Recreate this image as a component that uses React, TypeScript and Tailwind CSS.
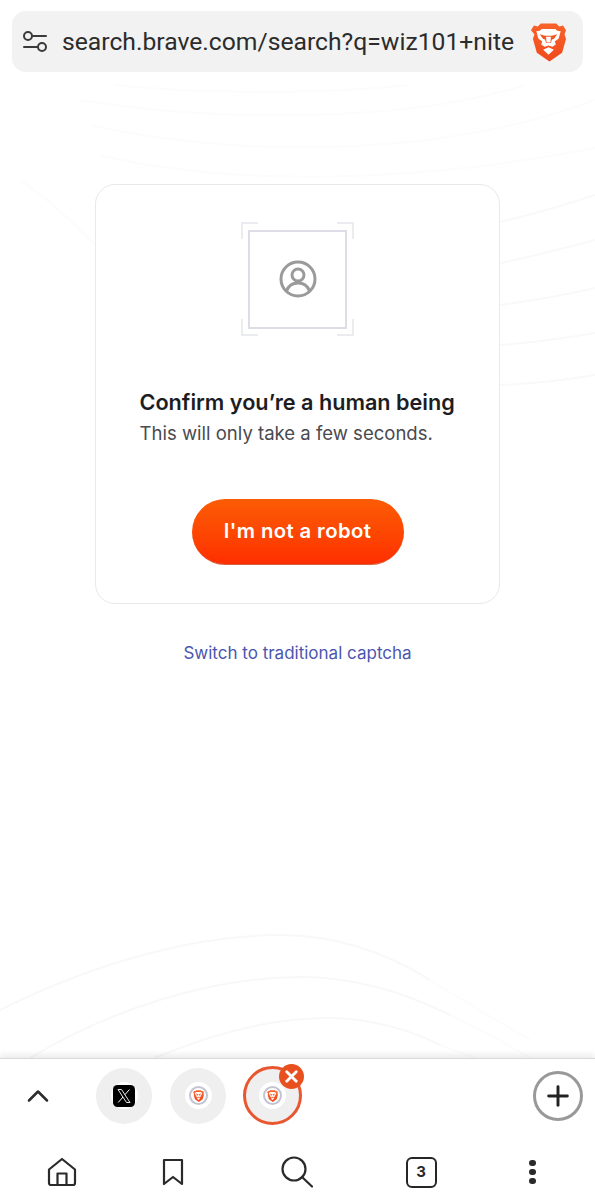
import React from 'react';
import { ChevronUp, Plus, X } from 'lucide-react';

const BraveLogo = ({ className }: { className?: string }) => (
  <svg viewBox="0 0 36 40" className={className}>
    <defs>
      <linearGradient id="braveShield" x1="0" y1="0" x2="0" y2="1">
        <stop offset="0" stopColor="#f9622a" />
        <stop offset="1" stopColor="#f04a1c" />
      </linearGradient>
    </defs>
    <path
      d="M10 1h16l3 3 4-1 3 5-1.500 4 1.500 5-4 14-13 9-13-9-4-14 1.500-5L0 8l3-5 4 1z"
      fill="url(#braveShield)"
    />
    <path
      d="M11 6.500h14l2 2 3.500.500-2 7.500-4 3 1 3-3.500 2.500-4-1.500-4 1.500-3.500-2.500 1-3-4-3-2-7.500 3.500-.500z"
      fill="#fff"
    />
    <path d="M9 12l5.500 1.500h7L27 12l-3.500 5-2 .500-1 3.500h-5l-1-3.500-2-.500z" fill="#f4561f" />
    <path d="M15.500 14.500h5l-.500 6h-4z" fill="#fff" />
    <path d="M12.500 28l5.500-2.500 5.500 2.500-5.500 5z" fill="#fff" />
  </svg>
);

const XLogo = () => (
  <svg viewBox="0 0 22 22" className="w-[22px] h-[22px]">
    <rect width="22" height="22" rx="4.500" fill="#000" />
    <path d="M5 4.500h3.500L17 17.500h-3.500z" fill="none" stroke="#fff" strokeWidth="0.900" />
    <path d="M16.500 4.500L11.800 9.800M10 12l-4.800 5.500" stroke="#fff" strokeWidth="1" />
  </svg>
);

const TabFavicon = () => (
  <div className="w-[27px] h-[27px] rounded-full bg-white flex items-center justify-center">
    <div className="w-[19px] h-[19px] rounded-full border-2 border-[#c3c4d2] flex items-center justify-center">
      <BraveLogo className="w-[11px] h-[12px]" />
    </div>
  </div>
);

const Corner = ({ className }: { className: string }) => (
  <div className={`absolute w-[17px] h-[17px] border-[#ebecef] ${className}`}></div>
);

export default function App() {
  return (
    <div className="relative w-[595px] h-[1200px] bg-white flex flex-col overflow-hidden">
      {/* faint wave lines behind the page */}
      <svg viewBox="0 0 595 1058" className="absolute left-0 top-0 w-[595px] h-[1058px]" fill="none" strokeWidth="2">
        <g stroke="#fcfcfc">
          <path d="M115 85C200 94 330 94 410 85" />
          <path d="M80 100C200 120 400 125 525 85" />
          <path d="M90 125C250 160 450 155 595 100" />
          <path d="M100 155C200 180 380 190 595 148" />
          <path d="M20 180C50 200 70 220 95 245" />
        </g>
        <g stroke="#f9f9f9">
          <path d="M500 222C530 215 565 205 595 195" />
          <path d="M500 263C530 257 565 248 595 240" />
          <path d="M500 305C530 301 565 295 595 288" />
          <path d="M500 345C530 343 565 338 595 333" />
          <path d="M500 385C530 384 565 380 595 375" />
        </g>
        <g stroke="#f8f8f8">
          <path d="M0 1010C100 960 200 935 280 935C340 935 390 955 430 980" />
          <path d="M30 1058C110 1010 210 977 300 977C360 977 410 995 450 1015" />
          <path d="M155 1058C220 1030 280 1018 330 1018C370 1018 410 1030 440 1045" />
        </g>
        <g stroke="#fcfcfc">
          <path d="M430 980C465 1002 500 1022 530 1040" />
          <path d="M450 1015C480 1030 505 1042 530 1058" />
          <path d="M440 1045C450 1049 465 1054 475 1058" />
        </g>
      </svg>

      <header className="relative px-3 pt-[11px]">
        <div className="h-[61px] rounded-[14px] bg-[#f2f2f2] flex items-center pl-[10px] pr-[17px]">
          <svg viewBox="0 0 26 24" className="w-[26px] h-[24px] text-[#3a3a3a] shrink-0" fill="none" stroke="currentColor" strokeWidth="2" strokeLinecap="round">
            <circle cx="6" cy="6" r="4" />
            <path d="M10 6h14" />
            <path d="M2 17h14" />
            <circle cx="20" cy="17" r="4" />
          </svg>
          <div className="ml-[14px] w-[452px] whitespace-nowrap font-['Roboto',sans-serif] text-[24.700px] text-[#2c2c2c]">
            search.brave.com/search?q=wiz101+nite
          </div>
          <BraveLogo className="w-[35px] h-[40px] ml-auto shrink-0" />
        </div>
      </header>

      <main className="relative flex-1 flex flex-col items-center pt-[112px] font-['Inter',sans-serif]">
        <div className="w-[405px] h-[420px] rounded-[20px] border border-[#e9e9e9] bg-white flex flex-col items-center pt-[37px]">
          <div className="relative w-[113px] h-[114px] flex items-center justify-center">
            <Corner className="left-0 top-0 border-l-2 border-t-2" />
            <Corner className="right-0 top-0 border-r-2 border-t-2" />
            <Corner className="left-0 bottom-0 border-l-2 border-b-2" />
            <Corner className="right-0 bottom-0 border-r-2 border-b-2" />
            <div className="w-[99px] h-[99px] border-2 border-[#dcdde6] flex items-center justify-center">
              <svg viewBox="0 0 38 38" className="w-[38px] h-[38px] text-[#9a9a9a]" fill="none" stroke="currentColor" strokeWidth="3">
                <circle cx="19" cy="19" r="17" />
                <circle cx="19" cy="15" r="6" />
                <path d="M7.500 31c2-5.500 6.500-8 11.500-8s9.500 2.500 11.500 8" />
              </svg>
            </div>
          </div>
          <div className="mt-[51px] w-[316px]">
            <h1 className="text-[21.650px] leading-[30px] font-semibold text-[#1d1d1f] whitespace-nowrap">Confirm you’re a human being</h1>
            <p className="mt-[1px] text-[18.550px] leading-[30px] text-[#4a4a4f] whitespace-nowrap">This will only take a few seconds.</p>
          </div>
          <button className="mt-[51px] w-[212px] h-[66px] rounded-full bg-gradient-to-b from-[#fb5b05] to-[#ff2d00] text-white text-[20.300px] font-semibold tracking-[0.4px] border-b border-[#d9603f]">
            I'm not a robot
          </button>
        </div>
        <a className="mt-[37px] text-[17px] leading-[24px] text-[#4a56b0]">Switch to traditional captcha</a>
      </main>

      <footer className="relative h-[142px] bg-white border-t border-[#d9d9d9] shadow-[0_-4px_5px_rgba(0,0,0,0.07)]">
        <div className="flex items-center h-[73px] pl-[20px] pr-[12px]">
          <ChevronUp className="w-[36px] h-[36px] text-[#2d2d2d]" strokeWidth={1.700} />
          <div className="ml-[40px] w-[56px] h-[56px] rounded-full bg-[#f0efef] flex items-center justify-center">
            <div className="w-[27px] h-[27px] bg-white rounded-full flex items-center justify-center">
              <XLogo />
            </div>
          </div>
          <div className="ml-[18px] w-[56px] h-[56px] rounded-full bg-[#f0efef] flex items-center justify-center">
            <TabFavicon />
          </div>
          <div className="relative ml-[17px] w-[59px] h-[59px] rounded-full bg-[#f0efef] border-[3px] border-[#e8572f] flex items-center justify-center">
            <TabFavicon />
            <div className="absolute -right-[5px] -top-[5px] w-[25px] h-[25px] rounded-full bg-[#e9501f] flex items-center justify-center">
              <X className="w-[19px] h-[19px] text-white" strokeWidth={3.500} />
            </div>
          </div>
          <div className="ml-auto w-[50px] h-[50px] rounded-full border-[3px] border-[#999999] flex items-center justify-center">
            <Plus className="w-[32px] h-[32px] text-[#222]" strokeWidth={2.200} />
          </div>
        </div>
        <nav className="grid grid-cols-[124px_98px_150px_98px_125px] items-center pt-[24px] text-[#2a2a2a]">
          <div className="flex justify-center">
            <svg viewBox="0 0 30 30" className="w-[30px] h-[30px]" fill="none" stroke="currentColor" strokeWidth="2.200" strokeLinejoin="round">
              <path d="M2 12.500L15 2l13 10.500V26a2 2 0 0 1-2 2H4a2 2 0 0 1-2-2z" />
              <path d="M10.500 28V16.500h9V28" />
            </svg>
          </div>
          <div className="flex justify-center">
            <svg viewBox="0 0 22 28" className="w-[22px] h-[28px]" fill="none" stroke="currentColor" strokeWidth="2.200" strokeLinejoin="round">
              <path d="M2 2h18v24l-9-7-9 7z" />
            </svg>
          </div>
          <div className="flex justify-center">
            <svg viewBox="0 0 32 32" className="w-[32px] h-[32px]" fill="none" stroke="currentColor" strokeWidth="2.200" strokeLinecap="round">
              <circle cx="13" cy="13" r="11.500" />
              <path d="M21 21l10 9.500" />
            </svg>
          </div>
          <div className="flex justify-center">
            <div className="w-[31px] h-[31px] rounded-[6px] border-[2.500px] border-[#262626] flex items-center justify-center font-['Inter',sans-serif] text-[15px] font-bold">3</div>
          </div>
          <div className="flex flex-col items-center gap-[2.500px]">
            <span className="w-[6.500px] h-[6.500px] rounded-full bg-[#2a2a2a]"></span>
            <span className="w-[6.500px] h-[6.500px] rounded-full bg-[#2a2a2a]"></span>
            <span className="w-[6.500px] h-[6.500px] rounded-full bg-[#2a2a2a]"></span>
          </div>
        </nav>
      </footer>
    </div>
  );
}
